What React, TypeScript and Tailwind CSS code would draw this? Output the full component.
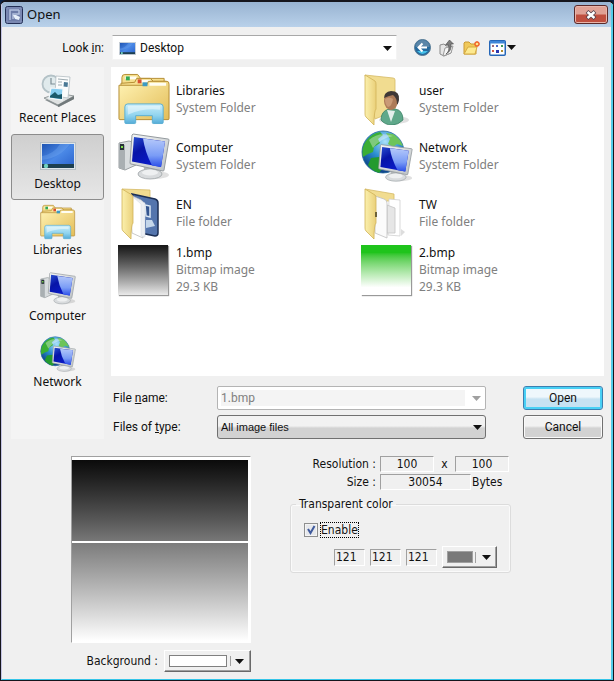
import type { ReactNode } from 'react';

interface IconProps {
  className?: string;
}

// ---- Shell icons ----

function RecentPlacesIcon({ className }: IconProps) {
  return (
    <svg className={className} viewBox="0 0 36 36" aria-hidden="true">
      <path d="M5 28 L21 24 L34 27 L19 35 Z" fill="#8b9294" />
      <path d="M4 26 L18 21 L34 24 L18 33 Z" fill="#dfe2e2" stroke="#7e8688" strokeWidth="0.8" />
      <path d="M18 33 L34 24 V27 L18 35 Z" fill="#70787a" />
      <circle cx="11" cy="12" r="8.5" fill="#e0eaec" stroke="#b4c2c7" strokeWidth="1.8" />
      <path d="M11 6 V12 H15" fill="none" stroke="#7c8d95" strokeWidth="1.2" />
      <path d="M16 4 L30 5 L28 26 L15 24 Z" fill="#fbfcfc" stroke="#b3bdc1" strokeWidth="0.8" />
      <path d="M18 7 L28 8 M18 10 L22 10 M18 13 L22 13" stroke="#9caab0" strokeWidth="1" />
      <path d="M24 10 L28 10.500 L27.500 15 L23.500 14.500 Z" fill="#4a7894" />
      <path d="M11 16 L23 17 L22 28 L9 26 Z" fill="#86cdf0" stroke="#f4f8fa" strokeWidth="1.2" />
      <path d="M10 24 L15 20 L18 23 L22 22 L22 27 L10 25.500 Z" fill="#1a5a6c" />
    </svg>
  );
}

function DesktopIcon({ className }: IconProps) {
  return (
    <svg className={className} viewBox="0 0 36 28" preserveAspectRatio="none" aria-hidden="true">
      <defs>
        <linearGradient id="desk" x1="0" y1="0" x2="1" y2="1">
          <stop offset="0" stopColor="#1f55b4" />
          <stop offset="0.5" stopColor="#4a88e6" />
          <stop offset="1" stopColor="#2a62cc" />
        </linearGradient>
      </defs>
      <rect x="0.500" y="0.500" width="35" height="27" fill="#dfe6ea" stroke="#b7bfc5" />
      <rect x="2" y="2" width="32" height="24" fill="url(#desk)" />
      <path d="M2 18 Q20 16 30 2 H20 Q14 12 2 14 Z" fill="#8cc0ff" opacity="0.250" />
      <rect x="2" y="22" width="32" height="4" fill="#1d3f4f" />
      <circle cx="6" cy="24" r="2.200" fill="#6fd0c0" />
    </svg>
  );
}

function LibrariesIcon({ className }: IconProps) {
  return (
    <svg className={className} viewBox="0 0 54 52" aria-hidden="true">
      <defs>
        <linearGradient id="libFolder" x1="0" y1="0" x2="1" y2="1">
          <stop offset="0" stopColor="#fff3b4" />
          <stop offset="1" stopColor="#e3bd58" />
        </linearGradient>
        <linearGradient id="libStand" x1="0" y1="0" x2="0" y2="1">
          <stop offset="0" stopColor="#c9eefa" />
          <stop offset="0.600" stopColor="#8fd3ee" />
          <stop offset="1" stopColor="#55acd8" />
        </linearGradient>
      </defs>
      <path d="M4 12 V4 Q4 1 7 1 H20 L23 5 H47 V40 H4 Z" fill="#f6df8c" stroke="#b58d33" />
      <rect x="7" y="3" width="12" height="3" fill="#fffdf2" />
      <rect x="8" y="3" width="4" height="4" fill="#34a853" />
      <path d="M3 14 V10 L17 9 L19 5 H33 L36 8 H49 V40 H3 Z" fill="#f7e08f" stroke="#b58d33" />
      <rect x="20" y="6.500" width="13" height="3" fill="#fffdf2" />
      <rect x="20" y="6" width="4" height="4" fill="#d9502e" />
      <path d="M1 12 H29 L31 8 H50 Q52 8 52 11 V46 Q52 47 51 47 H2 Q1 47 1 46 Z" fill="url(#libFolder)" stroke="#b58d33" />
      <rect x="32" y="9.500" width="17" height="3" fill="#fffdf2" />
      <rect x="25" y="9" width="5" height="4" fill="#3c9ac4" />
      <path
        d="M7 50 V34 Q7 31 10 31 H43 Q46 31 46 34 V50 Q46 51 45 51 H36 Q35 51 35 50 V43 H18 V50 Q18 51 17 51 H8 Q7 51 7 50 Z"
        fill="url(#libStand)"
        stroke="#5aaed3"
      />
      <path d="M10 33 H43 V37 Q26 35 10 42 Z" fill="#ffffff" opacity="0.450" />
    </svg>
  );
}

function Monitor() {
  return (
    <>
      <defs>
        <linearGradient id="screen" x1="0" y1="0" x2="0.700" y2="1">
          <stop offset="0" stopColor="#2a50d0" />
          <stop offset="0.400" stopColor="#0714a8" />
          <stop offset="1" stopColor="#0a1cd0" />
        </linearGradient>
        <linearGradient id="glare" x1="0" y1="0" x2="0" y2="1">
          <stop offset="0" stopColor="#b4c8fa" />
          <stop offset="0.600" stopColor="#7a9cf6" />
          <stop offset="1" stopColor="#2a4ee8" />
        </linearGradient>
        <linearGradient id="bezel" x1="0" y1="0" x2="1" y2="1">
          <stop offset="0" stopColor="#f4f6f6" />
          <stop offset="1" stopColor="#bcc1c4" />
        </linearGradient>
      </defs>
      <ellipse cx="36" cy="43" rx="15" ry="4" fill="#000000" opacity="0.120" />
      <path d="M25 32 L37 34 L36 42 H27 Z" fill="#b3b8bb" />
      <ellipse cx="32" cy="42" rx="12" ry="5" fill="#d8dbdd" stroke="#9ea4a7" strokeWidth="0.800" />
      <ellipse cx="32" cy="40.500" rx="8" ry="3" fill="#eef0f1" />
      <path d="M15 2 L50 7 Q51 7 51 8 L46 38 Q46 39 45 39 L13 32 Q12 32 12 31 L14 3 Z" fill="url(#bezel)" stroke="#959b9f" />
      <path d="M16 5 L47 9.500 L43 35 L14 29.500 Z" fill="url(#screen)" />
      <path d="M25 6.500 L47 9.500 L43 35 L34 33.500 Q27 20 25 6.500 Z" fill="url(#glare)" />
    </>
  );
}

function ComputerIcon({ className }: IconProps) {
  return (
    <svg className={className} viewBox="0 0 52 48" aria-hidden="true">
      <path d="M1 11 L11 9 L18 11 V33 L7 38 L1 36 Z" fill="#d8dcde" stroke="#9a9fa2" />
      <path d="M1 11 L7 13 V38 L1 36 Z" fill="#a9afb2" />
      <rect x="2" y="12" width="4" height="6" fill="#263036" />
      <rect x="3" y="14" width="2" height="2" fill="#7ddf4a" />
      <Monitor />
    </svg>
  );
}

function NetworkIcon({ className }: IconProps) {
  return (
    <svg className={className} viewBox="0 0 52 52" aria-hidden="true">
      <defs>
        <radialGradient id="globe" cx="0.550" cy="0.250" r="0.750">
          <stop offset="0" stopColor="#a8e0fa" />
          <stop offset="0.500" stopColor="#2c8fd0" />
          <stop offset="1" stopColor="#0b3f86" />
        </radialGradient>
      </defs>
      <circle cx="22" cy="22" r="21" fill="url(#globe)" stroke="#24689c" strokeWidth="0.800" />
      <path d="M5 11 Q11 3 19 2 L22 5 L17 9 L19 13 L13 17 L12 22 L7 24 L2 27 Q0 18 5 11 Z" fill="#3aae35" />
      <path d="M25 3 L32 4 Q39 8 42 16 L36 14 L32 17 L27 14 L29 9 Z" fill="#6cc45a" />
      <path d="M10 28 L18 27 L24 31 L22 38 L18 43 Q10 40 7 35 Z" fill="#239a2e" />
      <path d="M8 10 Q18 1 32 6 Q20 8 12 18 Z" fill="#ffffff" opacity="0.350" />
      <svg x="16" y="13" width="36" height="39" viewBox="10 0 42 48" preserveAspectRatio="none">
        <Monitor />
      </svg>
    </svg>
  );
}

function FolderLeaf() {
  return (
    <>
      <defs>
        <linearGradient id="leaf" x1="0" y1="0" x2="1" y2="0">
          <stop offset="0" stopColor="#fbf0ad" />
          <stop offset="1" stopColor="#ead07a" />
        </linearGradient>
      </defs>
      <path d="M1 2 L11 8 Q12 9 12 11 V36 Q10 38 10 52 L2 44 Q1 43 1 41 Z" fill="url(#leaf)" stroke="#d0b258" strokeWidth="0.800" />
    </>
  );
}

function UserFolderIcon({ className }: IconProps) {
  return (
    <svg className={className} viewBox="0 0 46 52" aria-hidden="true">
      <ellipse cx="30" cy="47" rx="15" ry="4" fill="#000000" opacity="0.120" />
      <path d="M1 2 L29 5 Q31 5 31 7 V38 L11 46 Z" fill="#f1dc90" stroke="#d6ba66" strokeWidth="0.800" />
      <FolderLeaf />
      <path d="M17 47 Q17 38 25 36 H31 Q39 37 39 47 Q34 52 28 52 Q21 52 17 47 Z" fill="#5fa88a" stroke="#3b8266" strokeWidth="0.800" />
      <path d="M23 37 L27 49 L31 38 Z" fill="#e4efec" />
      <ellipse cx="27" cy="28" rx="7" ry="9" fill="#ad7b58" />
      <path d="M20 25 Q20 19 27 18 Q36 18 35 27 Q34 32 33 31 Q33 25 29 22 Q24 23 20 25 Z" fill="#3f3836" />
      <path d="M21 26 Q25 23 29 26 Q28 33 24 34 Q21 32 21 26 Z" fill="#c99a76" />
    </svg>
  );
}

function EnFolderIcon({ className }: IconProps) {
  return (
    <svg className={className} viewBox="0 0 46 52" aria-hidden="true">
      <path d="M1 2 L29 3 V12 L11 14 Z" fill="#f1dc90" stroke="#d6ba66" strokeWidth="0.800" />
      <path d="M11 7 L34 12 Q37 13 37 16 V46 Q37 49 34 49 L20 46 Z" fill="#5475ad" stroke="#1c2f55" strokeWidth="1.500" />
      <path d="M24 18 L29 19 V30 L25 29 Z" fill="#34558f" stroke="#dce8f4" strokeWidth="1.500" />
      <path d="M25 33 L31 33 L34 39 L25 41 Z" fill="#c4d6ea" />
      <path d="M9 8 L20 13 Q22 14 22 16 V51 L11 46 Z" fill="#ffffff" stroke="#bcbcbc" strokeWidth="0.800" />
      <path d="M12 10 L24 16 V50 L20 49 V17 Z" fill="#eceff3" stroke="#d2d6dc" strokeWidth="0.500" />
      <FolderLeaf />
    </svg>
  );
}

function TwFolderIcon({ className }: IconProps) {
  return (
    <svg className={className} viewBox="0 0 46 52" aria-hidden="true">
      <path d="M1 2 L30 7 V14 L11 14 Z" fill="#f1dc90" stroke="#d6ba66" strokeWidth="0.800" />
      <path d="M25 12 L36 13 V49 L24 48 Z" fill="#ffffff" stroke="#cfcfcf" strokeWidth="0.800" />
      <path d="M23 18 L31 21 V46 L23 46 Z" fill="#e6e6e6" stroke="#c4c4c4" strokeWidth="0.800" />
      <path d="M11 9 L20 12 Q23 13 23 16 V51 L11 46 Z" fill="#fbfbfb" stroke="#c0c0c0" strokeWidth="0.800" />
      <path d="M37 49 L41 45 L37 42 Z" fill="#dddddd" />
      <FolderLeaf />
      <rect x="11" y="25" width="2" height="5" fill="#6d6238" />
    </svg>
  );
}

// ---- Toolbar icons ----

function AppIcon() {
  return (
    <svg className="size-[18px]" viewBox="0 0 18 18" aria-hidden="true">
      <rect x="0.500" y="0.500" width="17" height="17" rx="2" fill="#6d7ca8" stroke="#232f55" />
      <rect x="2" y="2" width="14" height="14" fill="none" stroke="#8794bb" />
      <path d="M5 14 V4 H14 M14 4 V8 H8 V13" fill="none" stroke="#b4c1de" strokeWidth="1.500" />
      <path d="M8 9 L11 9 L15 11 L14 14 L10 13 Z" fill="#e8f0fa" />
    </svg>
  );
}

function BackIcon() {
  return (
    <svg className="size-[17px]" viewBox="0 0 17 17" aria-hidden="true">
      <circle cx="8.500" cy="8.500" r="8" fill="#256a9e" stroke="#577a94" />
      <path d="M1.500 8 A7 7 0 0 1 15.500 8 Z" fill="#5b86a8" />
      <path d="M3 12 Q8.500 18 14 12 Z" fill="#45c1ea" />
      <path d="M13 8.500 H5 M8.500 4.500 L4.500 8.500 L8.500 12.500" fill="none" stroke="#ffffff" strokeWidth="2" />
    </svg>
  );
}

function UpIcon() {
  return (
    <svg className="h-[18px] w-4" viewBox="0 0 16 18" aria-hidden="true">
      <path d="M1 6 L5 5 L7 7 H12 V14 L5 17 L1 15 Z" fill="#e6e6e6" stroke="#8b8b8b" />
      <path d="M4 17 L6 9 L14 7 L12 14 Z" fill="#f5f5f5" stroke="#9a9a9a" />
      <path d="M7 15 Q11 12 9.500 6 H6.500 L10.500 1 L14.500 5 H12 Q13 12 7 15 Z" fill="#7c7c7c" stroke="#484848" strokeWidth="0.600" />
    </svg>
  );
}

function NewFolderIcon() {
  return (
    <svg className="h-4 w-[18px]" viewBox="0 0 18 16" aria-hidden="true">
      <path d="M1 14 V3 L2 2 H6 L8 4 H13 V14 Z" fill="#f0c95a" stroke="#c99a34" />
      <path d="M1 14 L5 7 H14 L12 14 Z" fill="#fde98f" stroke="#d5ab43" />
      <path d="M14 1 V7 M11 4 H17 M12 2 L16 6 M16 2 L12 6" stroke="#f0642c" strokeWidth="1.600" />
      <circle cx="14" cy="4" r="1.300" fill="#ffe38a" />
    </svg>
  );
}

function ViewIcon() {
  return (
    <svg className="h-4 w-[17px]" viewBox="0 0 17 16" aria-hidden="true">
      <rect x="0.750" y="0.750" width="15.500" height="14.500" rx="1" fill="#ffffff" stroke="#2566b8" strokeWidth="1.500" />
      <rect x="1" y="1" width="15" height="2.500" fill="#3f86d8" />
      <rect x="3" y="5" width="2" height="2" fill="#a06a7c" />
      <rect x="7" y="5" width="2" height="2" fill="#4a69c8" />
      <rect x="12" y="5" width="2" height="2" fill="#3f9a56" />
      <rect x="3" y="10" width="2" height="2" fill="#cf5646" />
      <rect x="7" y="10" width="3" height="3" fill="#2b37b0" />
      <rect x="12" y="10" width="2" height="2" fill="#b08a2e" />
    </svg>
  );
}

function Arrow({ className = '' }: IconProps) {
  return (
    <svg className={`h-[5px] w-[9px] ${className}`} viewBox="0 0 9 5" aria-hidden="true">
      <path d="M0 0 H9 L4.500 5 Z" fill="currentColor" />
    </svg>
  );
}

// ---- Dialog data ----

const places = [
  { name: 'Recent Places', icon: <RecentPlacesIcon className="h-9 w-9" /> },
  { name: 'Desktop', icon: <DesktopIcon className="my-1 h-7 w-9" />, active: true },
  { name: 'Libraries', icon: <LibrariesIcon className="h-9 w-9" /> },
  { name: 'Computer', icon: <ComputerIcon className="h-9 w-9" /> },
  { name: 'Network', icon: <NetworkIcon className="h-9 w-9" /> },
];

const files: { name: string; details: string[]; icon: ReactNode }[] = [
  { name: 'Libraries', details: ['System Folder'], icon: <LibrariesIcon className="h-[52px] w-[53px]" /> },
  { name: 'user', details: ['System Folder'], icon: <UserFolderIcon className="ml-[3px] h-[52px] w-[46px]" /> },
  { name: 'Computer', details: ['System Folder'], icon: <ComputerIcon className="h-12 w-[52px]" /> },
  { name: 'Network', details: ['System Folder'], icon: <NetworkIcon className="size-[52px]" /> },
  { name: 'EN', details: ['File folder'], icon: <EnFolderIcon className="ml-[3px] h-[52px] w-[46px]" /> },
  { name: 'TW', details: ['File folder'], icon: <TwFolderIcon className="ml-[3px] h-[52px] w-[46px]" /> },
  {
    name: '1.bmp',
    details: ['Bitmap image', '29.3 KB'],
    icon: <div className="size-[50px] bg-linear-to-b from-[#161616] to-[#eaeaea] shadow-[1px_1px_1px_#999]" />,
  },
  {
    name: '2.bmp',
    details: ['Bitmap image', '29.3 KB'],
    icon: <div className="size-[50px] bg-linear-to-b from-[#1fc41c] from-15% to-white to-85% shadow-[1px_1px_1px_#999]" />,
  },
];

const sunken = 'border border-t-[#a0a0a0] border-l-[#a0a0a0] border-r-white border-b-white bg-[#f0f0f0]';
const raised =
  'flex h-[22px] items-center border border-t-white border-l-white border-r-[#696969] border-b-[#696969] bg-[#f0f0f0] shadow-[inset_-1px_-1px_0_#a0a0a0]';

export default function App() {
  return (
    <div className="bg-[#0b2347] font-['DejaVu_Sans_Condensed','DejaVu_Sans',sans-serif] text-[12px] text-[#111111]">
      <div className="overflow-hidden rounded-t-md border-t-2 border-r border-b border-l border-[#15151c] bg-[#f0f0f0]">
        <div className="border-r-2 border-b border-l border-r-[#55cdea] border-b-[#35c5e8] border-l-[#c4c4e4]">
          <header className="flex h-[25px] items-center gap-1 bg-linear-to-b from-[#98b3d1] to-[#b9d1ea] pr-[3px] pl-[3px]">
            <AppIcon />
            <h1 className="flex-1 font-['Noto_Sans',sans-serif] text-[13px]">Open</h1>
            <button
              type="button"
              aria-label="Close"
              className="flex h-[19px] w-[34px] items-center justify-center rounded-[3px] border border-[#5b2a2a] bg-linear-to-b from-[#e0a195] from-45% to-[#bf4f3f] to-55% shadow-[inset_0_0_0_1px_#e9b5aa]"
            >
              <svg className="h-[10px] w-3" viewBox="0 0 12 10" aria-hidden="true">
                <path d="M2 1.500 L10 8.500 M10 1.500 L2 8.500" stroke="#54404a" strokeWidth="4" />
                <path d="M2.500 2 L9.500 8 M9.500 2 L2.500 8" stroke="#ffffff" strokeWidth="2.400" />
              </svg>
            </button>
          </header>

          <main className="pt-2 pr-[7px] pb-[7px] pl-[9px]">
            <div className="flex items-center font-['Roboto',sans-serif]">
              <label htmlFor="look-in" className="w-[101px] pr-2 text-right">
                Look <u>i</u>n:
              </label>
              <div className="relative min-w-0 flex-1">
                <DesktopIcon className="pointer-events-none absolute top-[7px] left-[7px] h-[13px] w-[17px]" />
                <select
                  id="look-in"
                  className="block h-[25px] w-full appearance-none border border-[#f4f4f4] border-t-[#a8a8a8] bg-white pl-[27px]"
                >
                  <option>Desktop</option>
                </select>
                <Arrow className="pointer-events-none absolute top-[11px] right-[5px]" />
              </div>
              <div className="flex w-[207px] items-center gap-2 pl-[17px]">
                <button type="button" aria-label="Back">
                  <BackIcon />
                </button>
                <button type="button" aria-label="Up one level">
                  <UpIcon />
                </button>
                <button type="button" aria-label="New folder">
                  <NewFolderIcon />
                </button>
                <button type="button" aria-label="View menu" className="flex items-center gap-px">
                  <ViewIcon />
                  <Arrow />
                </button>
              </div>
            </div>

            <div className="mt-[7px] flex gap-[7px]">
              <nav className="h-[372px] w-[93px] shrink-0 bg-[#f4f4f4] pt-px font-['Noto_Sans',sans-serif]">
                {places.map((place) => (
                  <button
                    key={place.name}
                    type="button"
                    className={`flex h-[66px] w-full flex-col items-center border pt-[3px] ${
                      place.active
                        ? 'rounded-[3px] border-[#8c8c8c] bg-linear-to-b from-[#cfcfcf] to-[#e6e6e6]'
                        : 'border-transparent'
                    }`}
                  >
                    {place.icon}
                    <span className="leading-5">{place.name}</span>
                  </button>
                ))}
              </nav>

              <div className="min-w-0 flex-1">
                <ul className="grid h-[309px] grid-cols-2 content-start bg-white pt-[3px] pl-[7px] font-['Noto_Sans',sans-serif]">
                  {files.map((file) => (
                    <li key={file.name} className="flex h-[57px] items-center">
                      <div className="flex w-[58px] shrink-0">{file.icon}</div>
                      <div className="leading-[17px]">
                        <p>{file.name}</p>
                        {file.details.map((line) => (
                          <p key={line} className="text-[#808080]">
                            {line}
                          </p>
                        ))}
                      </div>
                    </li>
                  ))}
                </ul>

                <div className="mt-[10px] grid grid-cols-[104px_1fr_80px] items-center gap-y-[5px] pr-px pl-[2px] font-['Roboto',sans-serif]">
                  <label htmlFor="file-name">
                    File <u>n</u>ame:
                  </label>
                  <div className="relative mr-[37px] rounded-[2px] border border-[#b4b4b4] bg-white p-[3px] pr-5">
                    <input
                      id="file-name"
                      disabled
                      defaultValue="1.bmp"
                      className="block h-4 w-full bg-[#f4f4f4] text-[#808080]"
                    />
                    <Arrow className="pointer-events-none absolute top-[9px] right-1 text-[#a0a0a0]" />
                  </div>
                  <button
                    type="button"
                    className="h-6 rounded-[3px] border border-[#3c7fb1] bg-linear-to-b from-[#eef7fc] from-45% to-[#c6e2f2] to-55% shadow-[inset_0_0_0_2px_#48d0f5]"
                  >
                    Open
                  </button>

                  <label htmlFor="file-type">
                    Files of <u>t</u>ype:
                  </label>
                  <div className="relative mr-[37px]">
                    <select
                      id="file-type"
                      className="block h-6 w-full appearance-none rounded-[3px] border border-[#707070] bg-linear-to-b from-[#f2f2f2] from-45% to-[#d2d2d2] to-55% pl-[3px] font-['Liberation_Sans',sans-serif] text-[11px]"
                    >
                      <option>All image files</option>
                    </select>
                    <Arrow className="pointer-events-none absolute top-[10px] right-1" />
                  </div>
                  <button
                    type="button"
                    className="h-6 rounded-[3px] border border-[#707070] bg-linear-to-b from-[#f2f2f2] from-45% to-[#d2d2d2] to-55% shadow-[inset_0_0_0_1px_#fafafa]"
                  >
                    Cancel
                  </button>
                </div>
              </div>
            </div>

            <div className="mt-[17px] flex items-start">
              <section className="ml-[60px] w-[180px]">
                <div className="h-[187px] border border-t-[#a0a0a0] border-r-white border-b-white border-l-[#a0a0a0] bg-white pt-[3px] pr-[2px]">
                  <div className="h-[81px] bg-linear-to-b from-[#0b0b0b] to-[#777777]" />
                  <div className="h-[100px] border-t-2 border-white bg-linear-to-b from-[#7c7c7c] to-white" />
                </div>
                <div className="mt-[7px] flex items-center justify-end gap-[6px]">
                  <span id="background-label">Background :</span>
                  <button type="button" aria-labelledby="background-label" className={`w-[87px] pl-1 ${raised}`}>
                    <span className="h-3 w-[58px] border border-[#808080] bg-white" />
                    <span className="mr-1 ml-[3px] h-[10px] w-px bg-[#a0a0a0]" />
                    <Arrow />
                  </button>
                </div>
              </section>

              <section className="ml-[39px] w-[221px]">
                <div className="grid w-[219px] grid-cols-[90px_54px_1fr_54px] items-center gap-y-[2px] leading-4">
                  <label htmlFor="res-width" className="pr-1 text-right">
                    Resolution :
                  </label>
                  <input id="res-width" readOnly defaultValue="100" className={`h-4 w-full text-center ${sunken}`} />
                  <span className="text-center">x</span>
                  <input
                    aria-label="Vertical resolution"
                    readOnly
                    defaultValue="100"
                    className={`h-4 w-full text-center ${sunken}`}
                  />
                </div>
                <div className="mt-[2px] flex items-center leading-4">
                  <label htmlFor="size" className="w-[90px] pr-1 text-right">
                    Size :
                  </label>
                  <input id="size" readOnly defaultValue="30054" className={`h-4 w-[91px] text-center ${sunken}`} />
                  <span className="pl-px">Bytes</span>
                </div>

                <fieldset className="mt-[6px] rounded-[3px] border border-[#dcdcdc] px-[13px] pb-1 shadow-[inset_0_0_0_1px_#fafafa]">
                  <legend className="-ml-2 px-[3px] leading-4">Transparent color</legend>
                  <label className="mt-[10px] flex w-fit items-center gap-[2px]">
                    <span className="relative size-[14px]">
                      <input
                        type="checkbox"
                        defaultChecked
                        className="peer block size-[14px] appearance-none border border-[#8e8f8f] bg-[#e6e8ec] shadow-[inset_0_0_0_1px_#f4f4f4]"
                      />
                      <svg
                        className="pointer-events-none absolute inset-0 hidden peer-checked:block"
                        viewBox="0 0 14 14"
                        aria-hidden="true"
                      >
                        <path d="M4 6 L6.500 10 L10.500 3" fill="none" stroke="#3f5a9c" strokeWidth="2" />
                      </svg>
                    </span>
                    <span className="border border-dotted border-black leading-[14px]">Enable</span>
                  </label>
                  <div className="mt-2 flex items-center justify-end gap-[5px]">
                    <input aria-label="Red" defaultValue="121" className={`h-[17px] w-[31px] pl-px ${sunken}`} />
                    <input aria-label="Green" defaultValue="121" className={`h-[17px] w-[31px] pl-px ${sunken}`} />
                    <input aria-label="Blue" defaultValue="121" className={`h-[17px] w-[31px] pl-px ${sunken}`} />
                    <button type="button" aria-label="Pick transparent color" className={`w-[55px] pl-1 ${raised}`}>
                      <span className="h-3 w-[26px] border border-[#a0a0a0] bg-[#797979]" />
                      <span className="mr-[6px] ml-[2px] h-[11px] w-px bg-[#a0a0a0]" />
                      <Arrow />
                    </button>
                  </div>
                </fieldset>
              </section>
            </div>
          </main>
        </div>
      </div>
    </div>
  );
}
